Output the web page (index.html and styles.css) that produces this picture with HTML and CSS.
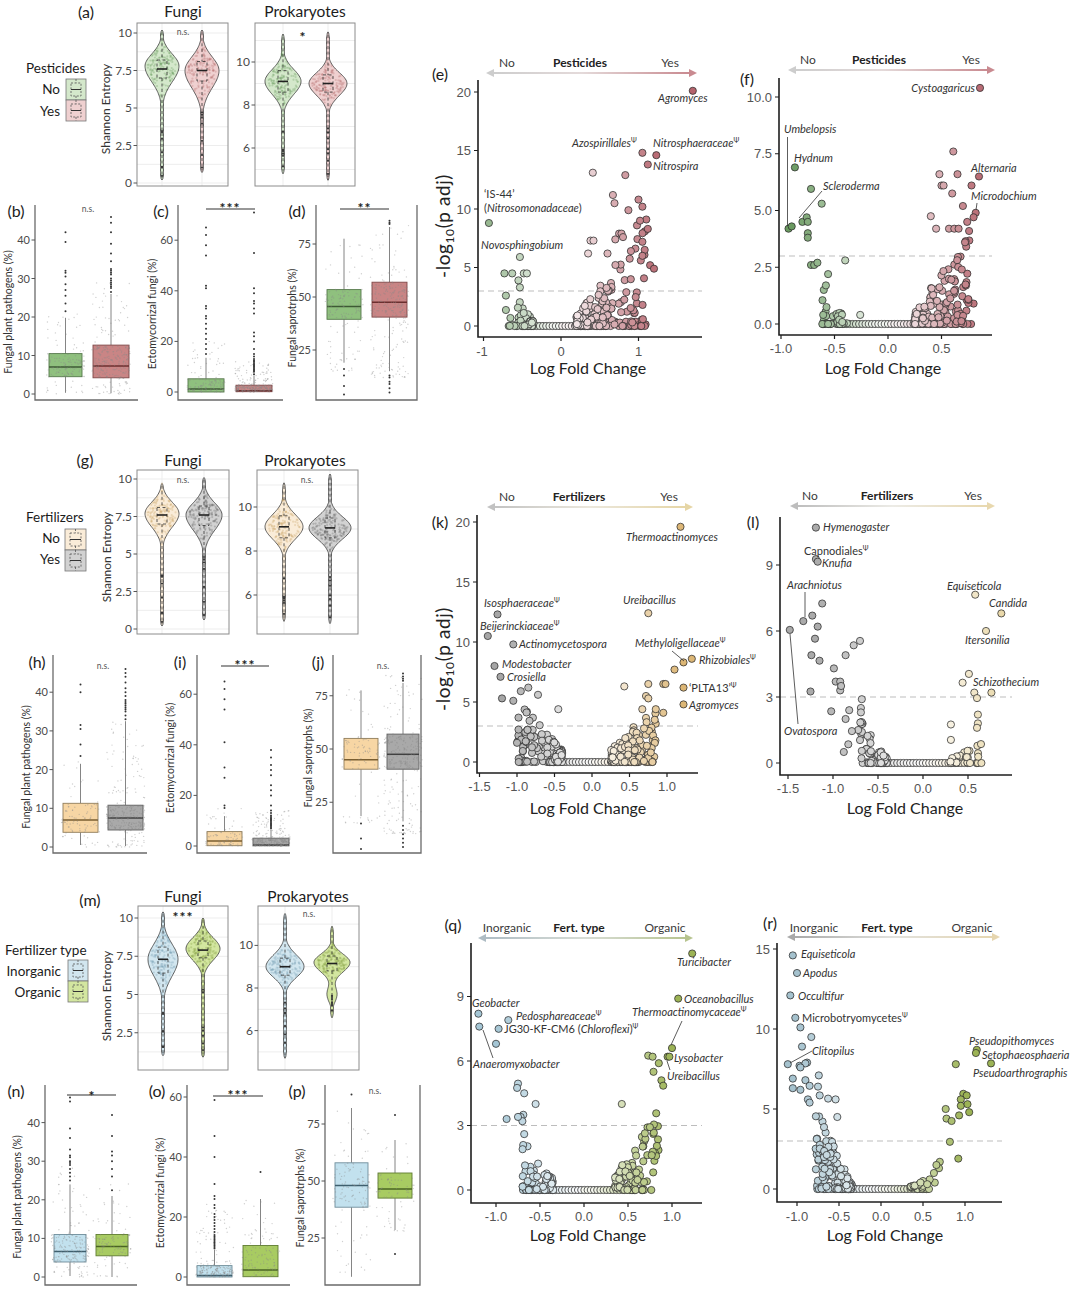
FILE: index.html
```html
<!DOCTYPE html>
<html lang="en">
<head>
<meta charset="utf-8">
<title>Pesticides and fertilizers — soil microbiome</title>
<link rel="stylesheet" href="styles.css">
</head>
<body>
<main class="fig">

<!-- ================= ROW 1 ================= -->
<section class="row">
 <div class="left">
  <svg id="v1" width="430" height="198" viewBox="0 0 430 198">
   <g class="grid"></g>
   <g class="vio"></g>
   <rect class="frm" x="137" y="23" width="91" height="163"/>
   <rect class="frm" x="255" y="23" width="100" height="163"/>
   <text class="pl" x="86" y="18">(a)</text>
   <text class="ttl" x="183" y="17">Fungi</text>
   <text class="ttl" x="305" y="17">Prokaryotes</text>
   <text class="lgt" x="26" y="73">Pesticides</text>
   <text class="lg" x="60" y="94">No</text>
   <text class="lg" x="60" y="116">Yes</text>
   <rect class="key kg" x="66" y="79" width="20" height="21"/>
   <rect class="key kr" x="66" y="100" width="20" height="21"/>
   <path class="keyd" d="M71 83h10v13h-10zM76 79v4M76 96v4M71 104h10v13h-10zM76 100v4M76 117v4"/>
   <path class="keym" d="M71 89.5h10M71 110.5h10"/>
   <path class="tm" d="M133.5 33h3.5M133.5 70.5h3.5M133.5 108h3.5M133.5 145.5h3.5M133.5 183h3.5M251.5 62h3.5M251.5 105h3.5M251.5 148h3.5"/>
   <g class="tk">
    <text x="132" y="37">10</text><text x="132" y="74.5">7.5</text><text x="132" y="112">5</text><text x="132" y="149.5">2.5</text><text x="132" y="187">0</text>
    <text x="250" y="66">10</text><text x="250" y="109">8</text><text x="250" y="152">6</text>
   </g>
   <text class="yt2" transform="translate(110,109) rotate(-90)">Shannon Entropy</text>
   <text class="ns" x="183" y="35">n.s.</text>
   <text class="sig" x="303" y="42">*</text>
  </svg>
  <div class="boxes">
   <svg id="b" width="145" height="237" viewBox="0 198 145 237">
    <path class="wh" d="M65.5 353.6V317.8M65.5 376.7V392.8M111 345.1V294M111 377.8V393"/>
    <rect class="bx bg" x="49" y="353.6" width="33" height="23.1"/>
    <path class="md mg" d="M49 367h33"/>
    <rect class="bx br" x="93" y="345.1" width="36" height="32.7"/>
    <path class="md mr" d="M93 365.9h36"/>
    <g class="jit"></g><g class="out"></g>
    <path class="ax" d="M35 205V400H138"/>
    <path class="tm" d="M31.5 394h3.5M31.5 355.5h3.5M31.5 317h3.5M31.5 278.5h3.5M31.5 240h3.5"/>
    <g class="tk tks"><text x="30" y="398">0</text><text x="30" y="359.5">10</text><text x="30" y="321">20</text><text x="30" y="282.5">30</text><text x="30" y="244">40</text></g>
    <text class="yt" transform="translate(12,312) rotate(-90)">Fungal plant pathogens (%)</text>
    <text class="pl" x="16" y="217">(b)</text>
    <text class="ns" x="88" y="212">n.s.</text>
   </svg>
   <svg id="c" width="145" height="237" viewBox="145 198 145 237">
    <path class="wh" d="M206 378.8V357.8M254 385.2V375.6"/>
    <rect class="bx bg" x="188" y="378.8" width="36" height="13.2"/>
    <path class="md mg" d="M188 389h36"/>
    <rect class="bx br" x="236" y="385.2" width="36" height="6.5"/>
    <path class="md mr" d="M236 390.7h36"/>
    <g class="jit"></g><g class="out"></g>
    <path class="ax" d="M178 205V400H283"/>
    <path class="tm" d="M174.5 392h3.5M174.5 341.4h3.5M174.5 290.8h3.5M174.5 240.2h3.5"/>
    <g class="tk tks"><text x="173" y="396">0</text><text x="173" y="345.4">20</text><text x="173" y="294.8">40</text><text x="173" y="244.2">60</text></g>
    <text class="yt" transform="translate(156,314) rotate(-90)">Ectomycorrizal fungi (%)</text>
    <text class="pl" x="161" y="217">(c)</text>
    <path class="sb" d="M206 209h49"/>
    <text class="sig" x="230" y="213">***</text>
   </svg>
   <svg id="d" width="140" height="237" viewBox="290 198 140 237">
    <path class="wh" d="M344 289.6V238.7M344 319.3V362.7M389.5 282.2V227M389.5 317.1V371.2"/>
    <rect class="bx bg" x="327" y="289.6" width="34" height="29.7"/>
    <path class="md mg" d="M327 306.5h34"/>
    <rect class="bx br" x="372" y="282.2" width="35" height="34.9"/>
    <path class="md mr" d="M372 302.3h35"/>
    <g class="jit"></g><g class="out"></g>
    <path class="ax" d="M316 205V400H417V205"/>
    <path class="tm" d="M312.5 350h3.5M312.5 297h3.5M312.5 244h3.5"/>
    <g class="tk tks"><text x="311" y="354">25</text><text x="311" y="301">50</text><text x="311" y="248">75</text></g>
    <text class="yt" transform="translate(296,318) rotate(-90)">Fungal saprotrphs (%)</text>
    <text class="pl" x="297" y="217">(d)</text>
    <path class="sb" d="M340 209h49"/>
    <text class="sig" x="364.5" y="213">**</text>
   </svg>
  </div>
 </div>

 <svg id="e" width="310" height="435" viewBox="430 0 310 435">
  <defs><linearGradient id="ge" x1="0" x2="1" y1="0" y2="0"><stop offset="0" stop-color="#cdcdcd"/><stop offset="0.45" stop-color="#e4dada"/><stop offset="1" stop-color="#c98a90"/></linearGradient></defs>
  <text class="hd" x="507" y="67">No</text><text class="hd hb" x="580" y="67">Pesticides</text><text class="hd" x="670" y="67">Yes</text>
  <rect x="493" y="72" width="197" height="2" fill="url(#ge)"/>
  <path d="M486 73l8-4v8z" fill="#cdcdcd"/><path d="M697 73l-8-4v8z" fill="#c98a90"/>
  <text class="pl" x="440" y="80">(e)</text>
  <path class="dl" d="M478 291H702"/>
  <g class="pts"></g>
  <path class="vax" d="M478 80V337H702"/>
  <path class="vtm" d="M474 326h4M474 267.5h4M474 209h4M474 150.5h4M474 92h4M483.5 337v4M561 337v4M638.5 337v4"/>
  <g class="vt"><text x="471" y="330.5">0</text><text x="471" y="272">5</text><text x="471" y="213.5">10</text><text x="471" y="155">15</text><text x="471" y="96.5">20</text></g>
  <g class="vtx"><text x="482" y="356">-1</text><text x="561" y="356">0</text><text x="638.5" y="356">1</text></g>
  <text class="vx" x="588" y="374">Log Fold Change</text>
  <text class="vy" transform="translate(450,226) rotate(-90)">-log<tspan class="sub" dy="4">10</tspan><tspan dy="-4">(p adj)</tspan></text>
  <text class="it" x="658" y="102">Agromyces</text>
  <text class="it" x="572" y="147">Azospirillales<tspan class="sup" dy="-4">Ψ</tspan></text>
  <text class="it" x="653" y="147">Nitrosphaeraceae<tspan class="sup" dy="-4">Ψ</tspan></text>
  <text class="it" x="653" y="170">Nitrospira</text>
  <text class="up" x="484" y="198">‘IS-44’</text>
  <text class="up" x="484" y="212">(<tspan class="itl">Nitrosomonadaceae</tspan>)</text>
  <text class="it" x="481" y="249">Novosphingobium</text>
 </svg>

 <svg id="f" width="340" height="435" viewBox="740 0 340 435">
  <defs><linearGradient id="gf" x1="0" x2="1" y1="0" y2="0"><stop offset="0" stop-color="#cdcdcd"/><stop offset="0.45" stop-color="#e4dada"/><stop offset="1" stop-color="#c98a90"/></linearGradient></defs>
  <text class="hd" x="808" y="64">No</text><text class="hd hb" x="879" y="64">Pesticides</text><text class="hd" x="971" y="64">Yes</text>
  <rect x="794" y="69" width="195" height="2" fill="url(#gf)"/>
  <path d="M788 70l8-4v8z" fill="#cdcdcd"/><path d="M995 70l-8-4v8z" fill="#c98a90"/>
  <text class="pl" x="747" y="85">(f)</text>
  <path class="dl" d="M779 256H992"/>
  <g class="pts"></g>
  <path class="vax" d="M779 78V335H992"/>
  <path class="vtm" d="M775 324h4M775 267.25h4M775 210.5h4M775 153.75h4M775 97h4M781 335v4M834.5 335v4M888 335v4M941.5 335v4"/>
  <g class="vt"><text x="772" y="328.5">0.0</text><text x="772" y="271.75">2.5</text><text x="772" y="215">5.0</text><text x="772" y="158.25">7.5</text><text x="772" y="101.5">10.0</text></g>
  <g class="vtx"><text x="781" y="353">-1.0</text><text x="834.5" y="353">-0.5</text><text x="888" y="353">0.0</text><text x="941.5" y="353">0.5</text></g>
  <text class="vx" x="883" y="374">Log Fold Change</text>
  <path class="ll" d="M787.5 137V226M822 191L799 218M977 203L976 210"/>
  <text class="it ends" x="975" y="92">Cystoagaricus</text>
  <text class="it" x="784" y="133">Umbelopsis</text>
  <text class="it" x="794" y="162">Hydnum</text>
  <text class="it" x="823" y="190">Scleroderma</text>
  <text class="it" x="971" y="172">Alternaria</text>
  <text class="it" x="971" y="200">Microdochium</text>
 </svg>
</section>

<!-- ================= ROW 2 ================= -->
<section class="row">
 <div class="left">
  <svg id="v2" width="430" height="210" viewBox="0 435 430 210">
   <g class="grid"></g>
   <g class="vio"></g>
   <rect class="frm" x="137" y="470" width="92" height="164"/>
   <rect class="frm" x="257" y="470" width="101" height="164"/>
   <text class="pl" x="85" y="466">(g)</text>
   <text class="ttl" x="183" y="466">Fungi</text>
   <text class="ttl" x="305" y="466">Prokaryotes</text>
   <text class="lgt" x="26" y="522">Fertilizers</text>
   <text class="lg" x="60" y="543">No</text>
   <text class="lg" x="60" y="564">Yes</text>
   <rect class="key kt" x="65" y="529" width="21" height="21"/>
   <rect class="key ky" x="65" y="550" width="21" height="21"/>
   <path class="keyd" d="M70 533h11v13h-11zM75.5 529v4M75.5 546v4M70 554h11v13h-11zM75.5 550v4M75.5 567v4"/>
   <path class="keym" d="M70 539.5h11M70 560.5h11"/>
   <path class="tm" d="M133.5 629h3.5M133.5 591.5h3.5M133.5 554h3.5M133.5 516.5h3.5M133.5 479h3.5M253.5 595h3.5M253.5 551h3.5M253.5 507h3.5"/>
   <g class="tk">
    <text x="132" y="633">0</text><text x="132" y="595.5">2.5</text><text x="132" y="558">5</text><text x="132" y="520.5">7.5</text><text x="132" y="483">10</text>
    <text x="252" y="599">6</text><text x="252" y="555">8</text><text x="252" y="511">10</text>
   </g>
   <text class="yt2" transform="translate(111,557) rotate(-90)">Shannon Entropy</text>
   <text class="ns" x="183" y="483">n.s.</text>
   <text class="ns" x="307" y="483">n.s.</text>
  </svg>
  <div class="boxes">
   <svg id="h" width="145" height="225" viewBox="0 645 145 225">
    <path class="wh" d="M80.5 803.3V763.8M80.5 832.3V845M125.5 805.2V721.2M125.5 830V846"/>
    <rect class="bx bt" x="63" y="803.3" width="35" height="29"/>
    <path class="md mt" d="M63 819.9h35"/>
    <rect class="bx by" x="108" y="805.2" width="35" height="24.8"/>
    <path class="md my" d="M108 818h35"/>
    <g class="jit"></g><g class="out"></g>
    <path class="ax" d="M53 655V853H147"/>
    <path class="tm" d="M49.5 847h3.5M49.5 808.3h3.5M49.5 769.6h3.5M49.5 730.9h3.5M49.5 692.2h3.5"/>
    <g class="tk tks"><text x="48" y="851">0</text><text x="48" y="812.3">10</text><text x="48" y="773.6">20</text><text x="48" y="734.9">30</text><text x="48" y="696.2">40</text></g>
    <text class="yt" transform="translate(30,767) rotate(-90)">Fungal plant pathogens (%)</text>
    <text class="pl" x="37" y="668">(h)</text>
    <text class="ns" x="103" y="669">n.s.</text>
   </svg>
   <svg id="i" width="145" height="225" viewBox="145 645 145 225">
    <path class="wh" d="M224.5 831.6V816.1M271 838.2V829.6"/>
    <rect class="bx bt" x="207" y="831.6" width="35" height="14.1"/>
    <path class="md mt" d="M207 841h35"/>
    <rect class="bx by" x="253" y="838.2" width="36" height="7.6"/>
    <path class="md my" d="M253 845h36"/>
    <g class="jit"></g><g class="out"></g>
    <path class="ax" d="M197 655V853H290"/>
    <path class="tm" d="M193.5 846h3.5M193.5 795.4h3.5M193.5 744.8h3.5M193.5 694.2h3.5"/>
    <g class="tk tks"><text x="192" y="850">0</text><text x="192" y="799.4">20</text><text x="192" y="748.8">40</text><text x="192" y="698.2">60</text></g>
    <text class="yt" transform="translate(174,758) rotate(-90)">Ectomycorrizal fungi (%)</text>
    <text class="pl" x="180" y="668">(i)</text>
    <path class="sb" d="M221 666h48"/>
    <text class="sig" x="245" y="670">***</text>
   </svg>
   <svg id="j" width="140" height="225" viewBox="290 645 140 225">
    <path class="wh" d="M361 738.4V690.4M361 769.2V816.1M403 734.1V683M403 769.2V821.4"/>
    <rect class="bx bt" x="344" y="738.4" width="34" height="30.8"/>
    <path class="md mt" d="M344 759.7h34"/>
    <rect class="bx by" x="387" y="734.1" width="32" height="35.1"/>
    <path class="md my" d="M387 754.3h32"/>
    <g class="jit"></g><g class="out"></g>
    <path class="ax" d="M333 655V853H421V655"/>
    <path class="tm" d="M329.5 802.25h3.5M329.5 749h3.5M329.5 695.75h3.5"/>
    <g class="tk tks"><text x="328" y="806.25">25</text><text x="328" y="753">50</text><text x="328" y="699.75">75</text></g>
    <text class="yt" transform="translate(312,758) rotate(-90)">Fungal saprotrphs (%)</text>
    <text class="pl" x="318" y="668">(j)</text>
    <text class="ns" x="383" y="669">n.s.</text>
   </svg>
  </div>
 </div>

 <svg id="k" width="310" height="435" viewBox="430 435 310 435">
  <defs><linearGradient id="gk" x1="0" x2="1" y1="0" y2="0"><stop offset="0" stop-color="#c2c2c2"/><stop offset="0.5" stop-color="#ebe7dc"/><stop offset="1" stop-color="#e6d6a6"/></linearGradient></defs>
  <text class="hd" x="507" y="501">No</text><text class="hd hb" x="579" y="501">Fertilizers</text><text class="hd" x="669" y="501">Yes</text>
  <rect x="493" y="506" width="194" height="2" fill="url(#gk)"/>
  <path d="M487 507l8-4v8z" fill="#c2c2c2"/><path d="M693 507l-8-4v8z" fill="#e6d6a6"/>
  <text class="pl" x="440" y="528">(k)</text>
  <path class="dl" d="M477 726H698"/>
  <g class="pts"></g>
  <path class="vax" d="M477 515V773H698"/>
  <path class="vtm" d="M473 762h4M473 702h4M473 642h4M473 582h4M473 522h4M479.5 773v4M517 773v4M554.5 773v4M592 773v4M629.5 773v4M667 773v4"/>
  <g class="vt"><text x="470" y="766.5">0</text><text x="470" y="706.5">5</text><text x="470" y="646.5">10</text><text x="470" y="586.5">15</text><text x="470" y="526.5">20</text></g>
  <g class="vtx"><text x="479.5" y="791">-1.5</text><text x="517" y="791">-1.0</text><text x="554.5" y="791">-0.5</text><text x="592" y="791">0.0</text><text x="629.5" y="791">0.5</text><text x="667" y="791">1.0</text></g>
  <text class="vx" x="588" y="814">Log Fold Change</text>
  <text class="vy" transform="translate(450,659) rotate(-90)">-log<tspan class="sub" dy="4">10</tspan><tspan dy="-4">(p adj)</tspan></text>
  <path class="ll" d="M672 651L684 661"/>
  <text class="it" x="626" y="541">Thermoactinomyces</text>
  <text class="it" x="623" y="604">Ureibacillus</text>
  <text class="it" x="484" y="607">Isosphaeraceae<tspan class="sup" dy="-4">Ψ</tspan></text>
  <text class="it" x="480" y="630">Beijerinckiaceae<tspan class="sup" dy="-4">Ψ</tspan></text>
  <text class="it" x="519" y="648">Actinomycetospora</text>
  <text class="it" x="502" y="668">Modestobacter</text>
  <text class="it" x="507" y="681">Crosiella</text>
  <text class="it" x="635" y="647">Methyloligellaceae<tspan class="sup" dy="-4">Ψ</tspan></text>
  <text class="it" x="699" y="664">Rhizobiales<tspan class="sup" dy="-4">Ψ</tspan></text>
  <text class="up" x="689" y="692">‘PLTA13’<tspan class="sup" dy="-4">Ψ</tspan></text>
  <text class="it" x="689" y="709">Agromyces</text>
 </svg>

 <svg id="l" width="340" height="435" viewBox="740 435 340 435">
  <defs><linearGradient id="gl" x1="0" x2="1" y1="0" y2="0"><stop offset="0" stop-color="#bdbdbd"/><stop offset="0.5" stop-color="#ecebe6"/><stop offset="1" stop-color="#e8d8ae"/></linearGradient></defs>
  <text class="hd" x="810" y="500">No</text><text class="hd hb" x="887" y="500">Fertilizers</text><text class="hd" x="973" y="500">Yes</text>
  <rect x="796" y="505" width="193" height="2" fill="url(#gl)"/>
  <path d="M790 506l8-4v8z" fill="#bdbdbd"/><path d="M995 506l-8-4v8z" fill="#e8d8ae"/>
  <text class="pl" x="753" y="528">(l)</text>
  <path class="dl" d="M780 697H1012"/>
  <g class="pts"></g>
  <path class="vax" d="M780 517V775H1012"/>
  <path class="vtm" d="M776 763h4M776 697h4M776 631h4M776 565h4M788 775v4M833 775v4M878 775v4M923 775v4M968 775v4"/>
  <g class="vt"><text x="773" y="767.5">0</text><text x="773" y="701.5">3</text><text x="773" y="635.5">6</text><text x="773" y="569.5">9</text></g>
  <g class="vtx"><text x="788" y="793">-1.5</text><text x="833" y="793">-1.0</text><text x="878" y="793">-0.5</text><text x="923" y="793">0.0</text><text x="968" y="793">0.5</text></g>
  <text class="vx" x="905" y="814">Log Fold Change</text>
  <path class="ll" d="M805 592V617M798 724L790 634"/>
  <text class="it" x="823" y="531">Hymenogaster</text>
  <text class="up" x="804" y="555">Capnodiales<tspan class="sup" dy="-4">Ψ</tspan></text>
  <text class="it" x="822" y="567">Knufia</text>
  <text class="it" x="787" y="589">Arachniotus</text>
  <text class="it" x="784" y="735">Ovatospora</text>
  <text class="it" x="947" y="590">Equiseticola</text>
  <text class="it" x="989" y="607">Candida</text>
  <text class="it" x="965" y="644">Itersonilia</text>
  <text class="it" x="973" y="686">Schizothecium</text>
 </svg>
</section>

<!-- ================= ROW 3 ================= -->
<section class="row">
 <div class="left">
  <svg id="v3" width="430" height="210" viewBox="0 870 430 210">
   <g class="grid"></g>
   <g class="vio"></g>
   <rect class="frm" x="138" y="906" width="90" height="164"/>
   <rect class="frm" x="258" y="906" width="101" height="164"/>
   <text class="pl" x="90" y="906">(m)</text>
   <text class="ttl" x="183" y="902">Fungi</text>
   <text class="ttl" x="308" y="902">Prokaryotes</text>
   <text class="lgt" x="5" y="955">Fertilizer type</text>
   <text class="lg" x="61" y="976">Inorganic</text>
   <text class="lg" x="61" y="997">Organic</text>
   <rect class="key kb" x="68" y="960" width="20" height="21"/>
   <rect class="key kl" x="68" y="981" width="20" height="21"/>
   <path class="keyd" d="M73 964h10v13h-10zM78 960v4M78 977v4M73 985h10v13h-10zM78 981v4M78 998v4"/>
   <path class="keym" d="M73 970.5h10M73 991.5h10"/>
   <path class="tm" d="M134.5 1032.75h3.5M134.5 994.5h3.5M134.5 956.25h3.5M134.5 918h3.5M254.5 1030.6h3.5M254.5 988h3.5M254.5 945.4h3.5"/>
   <g class="tk">
    <text x="133" y="1036.75">2.5</text><text x="133" y="998.5">5</text><text x="133" y="960.25">7.5</text><text x="133" y="922">10</text>
    <text x="253" y="1034.6">6</text><text x="253" y="992">8</text><text x="253" y="949.4">10</text>
   </g>
   <text class="yt2" transform="translate(111,996) rotate(-90)">Shannon Entropy</text>
   <text class="sig" x="183" y="922">***</text>
   <text class="ns" x="309" y="917">n.s.</text>
  </svg>
  <div class="boxes">
   <svg id="n" width="145" height="210" viewBox="0 1080 145 210">
    <path class="wh" d="M70 1234.5V1184.4M70 1262V1276M112 1234.5V1196M112 1255.8V1277"/>
    <rect class="bx bb" x="54" y="1234.5" width="32" height="27.5"/>
    <path class="md mb" d="M54 1251.5h32"/>
    <rect class="bx bl" x="96" y="1234.5" width="32" height="21.3"/>
    <path class="md ml" d="M96 1246.5h32"/>
    <g class="jit"></g><g class="out"></g>
    <path class="ax" d="M45 1085V1285H137"/>
    <path class="tm" d="M41.5 1277h3.5M41.5 1238.4h3.5M41.5 1199.8h3.5M41.5 1161.2h3.5M41.5 1122.6h3.5"/>
    <g class="tk tks"><text x="40" y="1281">0</text><text x="40" y="1242.4">10</text><text x="40" y="1203.8">20</text><text x="40" y="1165.2">30</text><text x="40" y="1126.6">40</text></g>
    <text class="yt" transform="translate(21,1197) rotate(-90)">Fungal plant pathogens (%)</text>
    <text class="pl" x="16" y="1097">(n)</text>
    <path class="sb" d="M67 1095h49"/>
    <text class="sig" x="92" y="1101">*</text>
   </svg>
   <svg id="o" width="145" height="210" viewBox="145 1080 145 210">
    <path class="wh" d="M214.5 1265.6V1250M260.5 1245.5V1199"/>
    <rect class="bx bb" x="197" y="1265.6" width="35" height="11.4"/>
    <path class="md mb" d="M197 1275.5h35"/>
    <rect class="bx bl" x="243" y="1245.5" width="35" height="31.2"/>
    <path class="md ml" d="M243 1270.1h35"/>
    <g class="jit"></g><g class="out"></g>
    <path class="ax" d="M187 1085V1285H290"/>
    <path class="tm" d="M183.5 1277h3.5M183.5 1217h3.5M183.5 1157h3.5M183.5 1097h3.5"/>
    <g class="tk tks"><text x="182" y="1281">0</text><text x="182" y="1221">20</text><text x="182" y="1161">40</text><text x="182" y="1101">60</text></g>
    <text class="yt" transform="translate(164,1193) rotate(-90)">Ectomycorrizal fungi (%)</text>
    <text class="pl" x="157" y="1097">(o)</text>
    <path class="sb" d="M213 1096h50"/>
    <text class="sig" x="238" y="1100">***</text>
   </svg>
   <svg id="p" width="140" height="210" viewBox="290 1080 140 210">
    <path class="wh" d="M351.5 1162.8V1108M351.5 1207.2V1276.8M395 1173V1140M395 1198.1V1230"/>
    <rect class="bx bb" x="335" y="1162.8" width="33" height="44.4"/>
    <path class="md mb" d="M335 1185.6h33"/>
    <rect class="bx bl" x="378" y="1173" width="34" height="25.1"/>
    <path class="md ml" d="M378 1189h34"/>
    <g class="jit"></g><g class="out"></g>
    <path class="ax" d="M325 1085V1285H420V1085"/>
    <path class="tm" d="M321.5 1238h3.5M321.5 1181h3.5M321.5 1124h3.5"/>
    <g class="tk tks"><text x="320" y="1242">25</text><text x="320" y="1185">50</text><text x="320" y="1128">75</text></g>
    <text class="yt" transform="translate(304,1198) rotate(-90)">Fungal saprotrphs (%)</text>
    <text class="pl" x="297" y="1097">(p)</text>
    <text class="ns" x="375" y="1094">n.s.</text>
   </svg>
  </div>
 </div>

 <svg id="q" width="310" height="420" viewBox="430 870 310 420">
  <defs><linearGradient id="gq" x1="0" x2="1" y1="0" y2="0"><stop offset="0" stop-color="#aebcc4"/><stop offset="0.5" stop-color="#d8ddd6"/><stop offset="1" stop-color="#b7c48f"/></linearGradient></defs>
  <text class="pl" x="453" y="931">(q)</text>
  <text class="hd" x="507" y="932">Inorganic</text><text class="hd hb" x="579" y="932">Fert. type</text><text class="hd" x="665" y="932">Organic</text>
  <rect x="484" y="937" width="203" height="2" fill="url(#gq)"/>
  <path d="M478 938l8-4v8z" fill="#aebcc4"/><path d="M693 938l-8-4v8z" fill="#b7c48f"/>
  <path class="dl" d="M471 1125.5H702"/>
  <g class="pts"></g>
  <path class="vax" d="M471 943V1203H702"/>
  <path class="vtm" d="M467 1190h4M467 1125.5h4M467 1061h4M467 996.5h4M496 1203v4M540 1203v4M584 1203v4M628 1203v4M672 1203v4"/>
  <g class="vt"><text x="464" y="1194.5">0</text><text x="464" y="1130">3</text><text x="464" y="1065.5">6</text><text x="464" y="1001">9</text></g>
  <g class="vtx"><text x="496" y="1221">-1.0</text><text x="540" y="1221">-0.5</text><text x="584" y="1221">0.0</text><text x="628" y="1221">0.5</text><text x="672" y="1221">1.0</text></g>
  <text class="vx" x="588" y="1241">Log Fold Change</text>
  <path class="ll" d="M682 1021L671 1045M493 1058L483 1030M670 1070L667 1061"/>
  <text class="it" x="677" y="966">Turicibacter</text>
  <text class="it" x="684" y="1003">Oceanobacillus</text>
  <text class="it" x="632" y="1016">Thermoactinomycaceae<tspan class="sup" dy="-4">Ψ</tspan></text>
  <text class="it" x="674" y="1062">Lysobacter</text>
  <text class="it" x="667" y="1080">Ureibacillus</text>
  <text class="it" x="472" y="1007">Geobacter</text>
  <text class="it" x="516" y="1020">Pedosphareaceae<tspan class="sup" dy="-4">Ψ</tspan></text>
  <text class="up" x="504" y="1033">JG30-KF-CM6 (<tspan class="itl">Chloroflexi</tspan>)<tspan class="sup" dy="-4">Ψ</tspan></text>
  <text class="it" x="473" y="1068">Anaeromyxobacter</text>
 </svg>

 <svg id="r" width="340" height="420" viewBox="740 870 340 420">
  <defs><linearGradient id="gr" x1="0" x2="1" y1="0" y2="0"><stop offset="0" stop-color="#a9a9a9"/><stop offset="0.5" stop-color="#e2e2de"/><stop offset="1" stop-color="#e6d6b0"/></linearGradient></defs>
  <text class="pl" x="770" y="929">(r)</text>
  <text class="hd" x="814" y="932">Inorganic</text><text class="hd hb" x="887" y="932">Fert. type</text><text class="hd" x="972" y="932">Organic</text>
  <rect x="793" y="936" width="201" height="2" fill="url(#gr)"/>
  <path d="M787 937l8-4v8z" fill="#a9a9a9"/><path d="M1000 937l-8-4v8z" fill="#e6d6b0"/>
  <path class="dl" d="M777 1141H1002"/>
  <g class="pts"></g>
  <path class="vax" d="M777 943V1202H1002"/>
  <path class="vtm" d="M773 1189h4M773 1109h4M773 1029h4M773 949h4M797 1202v4M839 1202v4M881 1202v4M923 1202v4M965 1202v4"/>
  <g class="vt"><text x="770" y="1193.5">0</text><text x="770" y="1113.5">5</text><text x="770" y="1033.5">10</text><text x="770" y="953.5">15</text></g>
  <g class="vtx"><text x="797" y="1221">-1.0</text><text x="839" y="1221">-0.5</text><text x="881" y="1221">0.0</text><text x="923" y="1221">0.5</text><text x="965" y="1221">1.0</text></g>
  <text class="vx" x="885" y="1241">Log Fold Change</text>
  <path class="ll" d="M812 1051L790 1063"/>
  <text class="it" x="801" y="958">Equiseticola</text>
  <text class="it" x="803" y="977">Apodus</text>
  <text class="it" x="798" y="1000">Occultifur</text>
  <text class="up" x="802" y="1022">Microbotryomycetes<tspan class="sup" dy="-4">Ψ</tspan></text>
  <text class="it" x="812" y="1055">Clitopilus</text>
  <text class="it" x="969" y="1045">Pseudopithomyces</text>
  <text class="it" x="982" y="1059">Setophaeosphaeria</text>
  <text class="it" x="973" y="1077">Pseudoarthrographis</text>
 </svg>
</section>

</main>
<script src="app.js"></script>
</body>
</html>
```

FILE: styles.css
```css
html, body { margin: 0; padding: 0; background: #ffffff; }
body { width: 1080px; height: 1290px; overflow: hidden; font-family: Lato, "Liberation Sans", sans-serif; }

.fig { display: flex; flex-direction: column; width: 1080px; }
.row { display: flex; }
.left { display: flex; flex-direction: column; width: 430px; }
.boxes { display: flex; }
svg { display: block; flex: none; overflow: visible; }
svg text { font-family: Lato, "Liberation Sans", "DejaVu Sans", sans-serif; }

/* generic labels */
.pl { font-size: 16px; fill: #1c1c1c; text-anchor: middle; }
.ttl { font-size: 15.5px; fill: #1c1c1c; text-anchor: middle; }
.lgt { font-size: 13.5px; fill: #1c1c1c; }
.lg { font-size: 13.5px; fill: #1c1c1c; text-anchor: end; }
.tk { font-size: 12px; fill: #4a4a4a; text-anchor: end; }
.tks { font-size: 11px; }
.tm { stroke: #555555; stroke-width: 1; fill: none; }
.frm { fill: none; stroke: #8c8c8c; stroke-width: 1; }
.yt { font-size: 10.5px; fill: #333333; text-anchor: middle; }
.yt2 { font-size: 12px; fill: #333333; text-anchor: middle; }
.ns { font-size: 8.5px; fill: #555555; text-anchor: middle; }
.sig { font-size: 14px; fill: #222222; text-anchor: middle; font-weight: 700; letter-spacing: 1px; }
.sb { stroke: #333333; stroke-width: 1.2; fill: none; }
.ax { fill: none; stroke: #6a6a6a; stroke-width: 1.3; }

/* legend keys */
.key { stroke: #777777; stroke-width: 0.8; }
.kg { fill: #d4e8cb; }
.kr { fill: #efd0d0; }
.kt { fill: #faecd8; }
.ky { fill: #d2d2d2; }
.kb { fill: #d2e6ef; }
.kl { fill: #d3e6a0; }
.keyd { fill: none; stroke: #555555; stroke-width: 0.8; stroke-dasharray: 2 1.6; }
.keym { stroke: #333333; stroke-width: 1.2; fill: none; }

/* violins */
.grid line { stroke: #ededed; stroke-width: 1; }
.vs { stroke: #3a3a3a; stroke-width: 0.8; }
.vj { opacity: 0.28; }
.vo { fill: #3a3a3a; }
.vd { stroke: #333333; stroke-width: 0.8; stroke-dasharray: 3 2.5; fill: none; }
.vb { fill: none; stroke: #333333; stroke-width: 0.8; stroke-dasharray: 3 2.5; }
.vm { stroke: #222222; stroke-width: 1.6; fill: none; }

/* box plots */
.wh { stroke: #777777; stroke-width: 0.9; fill: none; }
.bx { stroke-width: 0.9; }
.bg { fill: #8fc07e; stroke: #55784a; }
.br { fill: #c98585; stroke: #7f4848; }
.bt { fill: #f7d6a4; stroke: #8f7c5a; }
.by { fill: #a9a9a9; stroke: #5d5d5d; }
.bb { fill: #c2e1ee; stroke: #6f8d9a; }
.bl { fill: #a8cb62; stroke: #5f7c31; }
.md { stroke-width: 1.5; fill: none; }
.mg { stroke: #3d5a34; }
.mr { stroke: #6b2f2f; }
.mt { stroke: #7a5e30; }
.my { stroke: #404040; }
.mb { stroke: #3e5f6e; }
.ml { stroke: #4a6423; }
.jit circle { fill: #8a8a8a; opacity: 0.4; }
.out circle { fill: #333333; }

/* volcano plots */
.hd { font-size: 12px; fill: #3a3a3a; text-anchor: middle; }
.hb { font-weight: 700; fill: #222222; }
.dl { stroke: #bdbdbd; stroke-width: 1.2; stroke-dasharray: 6 4; fill: none; }
.vax { fill: none; stroke: #1e1e1e; stroke-width: 1.6; }
.vtm { stroke: #1e1e1e; stroke-width: 1.2; fill: none; }
.vt { font-size: 13px; fill: #555555; text-anchor: end; }
.vtx { font-size: 13px; fill: #555555; text-anchor: middle; }
.vt text, .vtx text { font-family: "Liberation Sans", Arial, sans-serif; }
.vx { font-size: 16px; fill: #222222; text-anchor: middle; }
.vy { font-size: 19px; fill: #222222; text-anchor: middle; letter-spacing: 0.6px; }
.sub { font-size: 12px; }
.pts circle { stroke: #2b2b2b; stroke-width: 0.75; }
.it { font-size: 11px; font-style: italic; fill: #333333; }
.up { font-size: 11px; fill: #333333; }
.itl { font-style: italic; }
.sup { font-size: 7px; font-style: normal; }
.ends { text-anchor: end; }
.ll { stroke: #333333; stroke-width: 0.8; fill: none; }
```

FILE: app.js
```js
(function () {
  var NS = 'http://www.w3.org/2000/svg';
  function mk(p, t, a) { var e = document.createElementNS(NS, t); for (var k in a) e.setAttribute(k, a[k]); p.appendChild(e); return e; }
  function rng(s) { s = s >>> 0; return function () { s = (Math.imul(s, 1664525) + 1013904223) >>> 0; return s / 4294967296; }; }
  function gs(r) { var u = r() || 1e-6, v = r(); return Math.sqrt(-2 * Math.log(u)) * Math.cos(6.2832 * v); }
  function rgb(h) { return [parseInt(h.substr(1, 2), 16), parseInt(h.substr(3, 2), 16), parseInt(h.substr(5, 2), 16)]; }
  function mix(h, t) { return 'rgb(' + rgb(h).map(function (v) { return Math.round(255 + (v - 255) * t); }).join(',') + ')'; }
  function q(id, sel) { return document.querySelector('#' + id + ' ' + sel); }
  function f1(v) { return (+v).toFixed(1); }

  /* ---------- volcano plots ---------- */
  function volcano(id, c) {
    var g = q(id, '.pts'), r = rng(c.seed);
    var X = function (v) { return c.x0 + v * c.sx; }, Y = function (v) { return c.y0 - v * c.sy; };
    var P = [], st = 3.2 / c.sx;
    for (var v = c.base[0]; v <= c.base[1] + 1e-9; v += st) P.push([v, 0]);
    c.arms.forEach(function (a) {
      for (var i = 0; i < a.n; i++) {
        var u = Math.pow(r(), a.p), x = a.a + (a.b - a.a) * u, ym = a.h0 + (a.h1 - a.h0) * u;
        var y = r() < a.z ? 0 : ym * Math.pow(r(), a.q);
        P.push([x, y]);
      }
    });
    P = P.concat(c.pts);
    P.forEach(function (p) {
      var t = Math.min(1, Math.max(0, (Math.abs(p[0]) - c.ct[0]) / (c.ct[1] - c.ct[0])));
      mk(g, 'circle', { cx: f1(X(p[0])), cy: f1(Y(p[1])), r: 3.6, fill: mix(p[0] < 0 ? c.cl : c.cr, 0.08 + 0.92 * t) });
    });
  }

  volcano('e', { seed: 5, x0: 561, sx: 77.5, y0: 326, sy: 11.7, cl: '#6f9c66', cr: '#b5646d', ct: [0.1, 1.3], base: [-0.48, 0.55],
    arms: [{ a: -0.36, b: -0.72, n: 60, h0: 0.4, h1: 4.2, p: 1.3, q: 1.6, z: 0.25 },
           { a: 0.2, b: 1.1, n: 170, h0: 0.8, h1: 9, p: 1.5, q: 1.5, z: 0.2 }],
    pts: [[1.7, 20.1], [1.05, 14.8], [1.23, 14.6], [1.12, 13.8], [0.41, 13.1], [0.83, 12.9], [0.67, 11.2], [0.69, 10.5], [1.0, 10.8], [1.05, 10.2], [0.87, 9.9], [1.1, 9.1], [0.98, 8.6], [1.02, 9.0], [1.12, 8.3], [0.75, 7.9], [0.78, 7.9], [0.7, 7.4], [0.8, 7.6], [-0.93, 8.8], [-0.53, 5.9], [1.05, 7.2], [1.08, 6.5], [1.15, 5.2], [1.2, 4.9], [0.9, 4.0], [1.03, 5.6], [1.05, 6.0], [0.38, 7.3], [0.42, 7.3], [0.35, 6.2], [0.6, 6.2], [-0.73, 4.5], [-0.63, 4.5], [-0.48, 4.5], [-0.44, 4.5], [-0.55, 3.9], [-0.53, 3.3]] });

  volcano('f', { seed: 6, x0: 888, sx: 107, y0: 324, sy: 22.7, cl: '#6a9a60', cr: '#b5646d', ct: [0.1, 0.9], base: [-0.42, 0.45],
    arms: [{ a: -0.38, b: -0.62, n: 35, h0: 0.3, h1: 1.2, p: 1, q: 1.3, z: 0.3 },
           { a: 0.25, b: 0.8, n: 150, h0: 0.5, h1: 4.4, p: 1.3, q: 1.3, z: 0.15 }],
    pts: [[-0.93, 4.2], [-0.9, 4.3], [-0.8, 4.5], [-0.76, 4.7], [-0.75, 4.5], [-0.75, 4.0], [-0.75, 3.8], [-0.72, 5.95], [-0.87, 6.9], [-0.62, 5.3], [-0.72, 2.6], [-0.69, 2.6], [-0.66, 2.7], [-0.4, 2.8], [-0.56, 2.2], [-0.6, 1.5], [-0.58, 1.7], [-0.26, 0.4],
      [0.61, 7.6], [0.86, 10.4], [0.48, 6.6], [0.65, 6.6], [0.5, 6.1], [0.52, 6.1], [0.6, 5.75], [0.78, 6.1], [0.85, 6.5], [0.7, 5.2], [0.82, 4.9], [0.8, 4.7], [0.74, 4.5], [0.72, 3.6], [0.4, 4.75], [0.45, 4.2], [0.57, 4.2], [0.62, 4.2], [0.66, 4.2], [0.69, 2.4]] });

  volcano('k', { seed: 7, x0: 592, sx: 75, y0: 762, sy: 12, cl: '#a6a6a6', cr: '#dcb675', ct: [0.1, 1.2], base: [-0.6, 0.6],
    arms: [{ a: -0.4, b: -1.0, n: 130, h0: 1, h1: 5.2, p: 1.5, q: 1.3, z: 0.15 },
           { a: 0.25, b: 0.85, n: 140, h0: 1, h1: 4.8, p: 1.2, q: 1.4, z: 0.15 }],
    pts: [[1.18, 19.6], [0.75, 12.4], [-1.26, 12.3], [-1.39, 10.5], [-1.05, 9.8], [-1.3, 8.0], [-1.22, 7.1], [1.22, 8.3], [1.33, 8.6], [1.22, 6.2], [1.22, 4.8], [0.43, 6.3], [0.75, 6.5], [0.95, 6.5], [0.98, 6.5], [0.72, 5.5], [0.75, 5.3], [1.1, 7.7], [-0.85, 6.2], [-0.95, 5.9], [-0.72, 5.6], [-1.2, 5.3], [-1.05, 5.1], [-0.45, 4.4], [0.67, 4.4], [0.85, 4.4], [0.95, 4.1], [-1.0, 1.6], [-0.98, 2.7], [-0.98, 3.7]] });

  volcano('l', { seed: 8, x0: 923, sx: 90, y0: 763, sy: 22, cl: '#aaaaaa', cr: '#e0c98a', ct: [0.1, 1.2], base: [-0.5, 0.5],
    arms: [{ a: -0.4, b: -0.7, n: 75, h0: 0.3, h1: 2.0, p: 1, q: 1.5, z: 0.2 },
           { a: 0.3, b: 0.65, n: 28, h0: 0.2, h1: 0.9, p: 1, q: 1.2, z: 0.3 }],
    pts: [[-1.19, 10.7], [-1.19, 9.27], [-1.17, 9.15], [-1.33, 6.45], [-1.48, 6.05], [-1.23, 6.7], [-1.12, 7.25], [-1.17, 6.2], [-1.2, 5.65], [-1.24, 4.9], [-1.15, 4.65], [-1.25, 3.25], [-0.99, 4.3], [-0.97, 3.7], [-0.92, 3.7], [-0.92, 3.3], [-0.86, 4.9], [-0.77, 5.35], [-0.7, 5.55], [-0.91, 3.5], [-0.68, 2.9], [-0.69, 2.5], [-0.69, 2.3], [-1.02, 2.35], [-0.82, 2.4], [-0.86, 2.0], [-0.88, 0.5], [-0.83, 0.85], [-0.72, 1.5], [-0.79, 1.45],
      [0.58, 7.65], [0.87, 6.8], [0.7, 6.0], [0.51, 4.05], [0.44, 3.65], [0.57, 3.2], [0.76, 3.2], [0.6, 2.95], [0.61, 2.2], [0.61, 1.8], [0.6, 1.6], [0.31, 1.75], [0.31, 1.05]] });

  volcano('q', { seed: 9, x0: 584, sx: 88, y0: 1190, sy: 21.5, cl: '#a5c6d5', cr: '#9cb355', ct: [0.1, 1.0], base: [-0.65, 0.55],
    arms: [{ a: -0.35, b: -0.7, n: 70, h0: 0.5, h1: 2.6, p: 1, q: 1.4, z: 0.2 },
           { a: 0.35, b: 0.85, n: 95, h0: 0.6, h1: 4.2, p: 1, q: 1.3, z: 0.15 }],
    pts: [[1.23, 11.0], [1.07, 8.9], [1.0, 6.6], [0.95, 6.2], [0.97, 6.2], [0.73, 6.25], [0.78, 6.2], [0.85, 5.9], [0.79, 5.5], [0.88, 5.1], [0.9, 4.85], [0.43, 4.0], [-1.2, 8.2], [-0.86, 7.9], [-0.97, 7.5], [-1.19, 7.6], [-1.0, 6.8], [-0.75, 4.95], [-0.76, 4.75], [-0.68, 4.5], [-0.55, 4.0], [-0.88, 3.3], [-0.69, 3.5], [-0.72, 3.4], [-0.7, 3.2], [-0.68, 2.6], [-0.75, 3.4]] });

  volcano('r', { seed: 10, x0: 881, sx: 84, y0: 1189, sy: 16, cl: '#a5c2ce', cr: '#9cb355', ct: [0.1, 1.0], base: [-0.45, 0.55],
    arms: [{ a: -0.35, b: -0.78, n: 150, h0: 0.3, h1: 5.2, p: 1.3, q: 1.2, z: 0.12 },
           { a: 0.35, b: 0.6, n: 15, h0: 0.2, h1: 0.6, p: 1, q: 1, z: 0.3 }],
    pts: [[-1.05, 14.6], [-1.0, 13.5], [-1.08, 12.1], [-1.02, 10.7], [-0.96, 10.1], [-0.83, 9.5], [-0.94, 8.9], [-1.11, 7.8], [-0.97, 7.7], [-0.88, 7.9], [-0.9, 7.85], [-0.96, 7.6], [-1.05, 6.9], [-1.05, 6.3], [-0.9, 6.8], [-0.85, 6.45], [-0.74, 7.1], [-0.75, 6.4], [-0.96, 6.2], [-0.73, 5.85], [-0.63, 5.65], [-0.54, 5.6], [-0.87, 5.6], [-0.85, 5.4], [-0.52, 4.5],
      [1.14, 8.7], [1.13, 8.5], [1.31, 7.85], [0.89, 7.8], [0.98, 5.95], [1.02, 5.85], [0.95, 5.6], [0.95, 5.2], [1.03, 5.3], [1.05, 4.8], [0.77, 5.0], [0.78, 4.4], [0.84, 4.25], [0.93, 4.6], [0.82, 2.95], [0.92, 1.9], [0.7, 1.7], [0.69, 1.3], [0.66, 1.5], [0.63, 1.0], [0.64, 0.4], [0.58, 0.6], [0.5, 0.5], [0.47, 0.4], [0.55, 0.3]] });

  /* ---------- box plot jitter + outliers ---------- */
  var BX = [
    { id: 'b', cx: 65.5, y0: 394, s: 3.85, q1: 4.5, q3: 10.5, lo: 0, hi: 22, n: 140, seed: 11, out: [21.5, 23.5, 25.5, 27, 28.5, 30.5, 31.5, 32, 39.5, 42] },
    { id: 'b', cx: 111, y0: 394, s: 3.85, q1: 4.2, q3: 12.7, lo: 0, hi: 30, n: 260, seed: 12, out: [26.5, 27.5, 28, 28.5, 29, 29.5, 30, 31, 31.5, 32, 32.5, 34.5, 36.5, 39, 42, 44.5, 46] },
    { id: 'c', cx: 206, y0: 392, s: 2.53, q1: 0, q3: 5.2, lo: 0, hi: 20, n: 140, seed: 13, out: [15, 17, 19, 21, 23, 25, 27, 29, 30, 33, 34, 41, 42, 54, 58, 62, 65] },
    { id: 'c', cx: 254, y0: 392, s: 2.53, q1: 0, q3: 2.7, lo: 0, hi: 12, n: 260, seed: 14, out: [7, 8, 8.5, 9, 9.5, 10, 10.5, 11, 11.5, 12, 12.5, 13, 14, 15, 17, 20, 22, 23.5, 31, 33, 35, 36, 39, 41, 55, 71] },
    { id: 'd', cx: 344, y0: 403, s: 2.12, q1: 39.5, q3: 53.5, lo: 15, hi: 80, n: 140, seed: 15, out: [16, 13, 8, 4] },
    { id: 'd', cx: 389.5, y0: 403, s: 2.12, q1: 40.5, q3: 57, lo: 12, hi: 86, n: 260, seed: 16, out: [86, 85, 84.5, 13, 12, 10, 9, 7, 5] },
    { id: 'h', cx: 80.5, y0: 847, s: 3.87, q1: 3.8, q3: 11.3, lo: 0, hi: 22, n: 90, seed: 21, out: [23.5, 26.5, 30.5, 31.5, 40, 42] },
    { id: 'h', cx: 125.5, y0: 847, s: 3.87, q1: 4.4, q3: 10.8, lo: 0, hi: 33, n: 300, seed: 22, out: [33, 34, 35, 35.5, 36, 36.5, 37, 37.5, 38, 39, 40, 41, 42.5, 44, 45, 46] },
    { id: 'i', cx: 224.5, y0: 846, s: 2.53, q1: 0, q3: 5.7, lo: 0, hi: 15, n: 90, seed: 23, out: [15, 16, 27, 31, 41, 54, 58, 62, 65] },
    { id: 'i', cx: 271, y0: 846, s: 2.53, q1: 0, q3: 3.1, lo: 0, hi: 14, n: 300, seed: 24, out: [7, 7.5, 8, 8.5, 9, 9.5, 10, 10.5, 11, 11.5, 12, 13, 14, 16, 20, 22, 24, 28, 30, 32, 35, 38] },
    { id: 'j', cx: 361, y0: 855.5, s: 2.13, q1: 40.5, q3: 55, lo: 15, hi: 78, n: 90, seed: 25, out: [15, 8, 3] },
    { id: 'j', cx: 403, y0: 855.5, s: 2.13, q1: 40.5, q3: 57, lo: 10, hi: 85, n: 300, seed: 26, out: [85.5, 84, 83, 82, 14, 12, 10, 8, 6, 4] },
    { id: 'n', cx: 70, y0: 1277, s: 3.86, q1: 3.9, q3: 11, lo: 0, hi: 30, n: 200, seed: 31, out: [25, 26, 27, 28, 29, 29.5, 30, 31, 31.5, 33, 36, 38.5, 45.5, 46.5] },
    { id: 'n', cx: 112, y0: 1277, s: 3.86, q1: 5.5, q3: 11, lo: 0, hi: 25, n: 120, seed: 32, out: [22.5, 26, 28, 30, 31.5, 32.5, 36.5, 42] },
    { id: 'o', cx: 214.5, y0: 1277, s: 3, q1: 0, q3: 3.8, lo: 0, hi: 25, n: 200, seed: 33, out: [9.5, 10, 10.5, 11, 11.5, 12, 12.5, 13, 13.5, 14, 15, 16, 17, 18, 19, 20, 21, 23, 24, 26, 27, 31, 40, 47, 59] },
    { id: 'o', cx: 260.5, y0: 1277, s: 3, q1: 0, q3: 10.5, lo: 0, hi: 26, n: 120, seed: 34, out: [35] },
    { id: 'p', cx: 351.5, y0: 1295, s: 2.28, q1: 38.5, q3: 58, lo: 10, hi: 82, n: 120, seed: 35, out: [88] },
    { id: 'p', cx: 395, y0: 1295, s: 2.28, q1: 42.5, q3: 53.5, lo: 28, hi: 70, n: 80, seed: 36, out: [79, 18] }
  ];
  BX.forEach(function (b) {
    var gj = q(b.id, '.jit'), go = q(b.id, '.out'), r = rng(b.seed);
    var Y = function (v) { return b.y0 - v * b.s; };
    for (var i = 0; i < b.n; i++) {
      var v = r() < 0.55 ? b.q1 + (b.q3 - b.q1) * r() : b.lo + (b.hi - b.lo) * Math.pow(r(), 1.6);
      mk(gj, 'circle', { cx: f1(b.cx + (r() - 0.5) * 38), cy: f1(Y(v)), r: 0.7 });
    }
    b.out.forEach(function (v) { mk(go, 'circle', { cx: b.cx, cy: f1(Y(v)), r: 1 }); });
  });

  /* ---------- violins ---------- */
  function grid(id, x1, x2, y1, y2, Y, lo, hi, step, xs) {
    var g = q(id, '.grid');
    for (var v = lo; v <= hi + 1e-9; v += step / 2) { var y = Y(v); if (y > y1 && y < y2) mk(g, 'line', { x1: x1, x2: x2, y1: f1(y), y2: f1(y) }); }
    xs.forEach(function (x) { mk(g, 'line', { x1: x, x2: x, y1: y1, y2: y2 }); });
  }
  function violin(id, c) {
    var g = q(id, '.vio'), r = rng(c.seed);
    var Y = function (v) { return c.ya - (v - c.va) * c.s; };
    function W(v) {
      var sd = v < c.mode ? c.sdL : c.sdU;
      var w = c.hw * Math.exp(-0.5 * Math.pow((v - c.mode) / sd, 2));
      if (c.ex) w += c.ex[2] * Math.exp(-0.5 * Math.pow((v - c.ex[0]) / c.ex[1], 2));
      w = Math.max(w, 1.5);
      var e = Math.min(1, (c.max - v) / 0.3, (v - c.min) / 0.3);
      return w * Math.sqrt(Math.max(e, 0));
    }
    var N = 120, R = [], L = [];
    for (var i = 0; i <= N; i++) {
      var v = c.max - (c.max - c.min) * i / N, w = W(v);
      R.push(f1(c.cx + w) + ',' + f1(Y(v)));
      L.unshift(f1(c.cx - w) + ',' + f1(Y(v)));
    }
    mk(g, 'path', { d: 'M' + R.join('L') + 'L' + L.join('L') + 'Z', fill: c.fill, 'class': 'vs' });
    for (i = 0; i < 150; i++) {
      var sd = r() < 0.5 ? c.sdL : c.sdU, v2 = c.mode + gs(r) * sd * 0.9;
      if (v2 < c.min || v2 > c.max) continue;
      mk(g, 'circle', { cx: f1(c.cx + (r() * 2 - 1) * W(v2) * 0.85), cy: f1(Y(v2)), r: 1.1, fill: c.dot, 'class': 'vj' });
    }
    var lim = c.q1 - 1.5 * (c.q3 - c.q1);
    for (i = 0; i < 7; i++) { var v3 = c.min + 0.2 + (lim - c.min - 0.2) * r(); mk(g, 'circle', { cx: c.cx, cy: f1(Y(v3)), r: 1.1, 'class': 'vo' }); }
    var hx = 5;
    mk(g, 'path', { d: 'M' + c.cx + ' ' + f1(Y(c.max - 0.15)) + 'V' + f1(Y(c.q3)) + 'M' + c.cx + ' ' + f1(Y(c.q1)) + 'V' + f1(Y(c.min + 0.15)), 'class': 'vd' });
    mk(g, 'rect', { x: c.cx - hx, y: f1(Y(c.q3)), width: 2 * hx, height: f1(Y(c.q1) - Y(c.q3)), 'class': 'vb' });
    mk(g, 'path', { d: 'M' + (c.cx - hx) + ' ' + f1(Y(c.med)) + 'h' + (2 * hx), 'class': 'vm' });
  }

  function setRow(id, fy, py, fx, px, fF, pF, cols, fungiLo) {
    var FY = function (v) { return fy.ya - (v - fy.va) * fy.s; }, PY = function (v) { return py.ya - (v - py.va) * py.s; };
    grid(id, fx[0], fx[1], fx[2], fx[3], FY, fungiLo, 10, 2.5, [fF[0], fF[1]]);
    grid(id, px[0], px[1], px[2], px[3], PY, 4, 12, 2, [pF[0], pF[1]]);
    cols.forEach(function (c, k) {
      var isF = k < 2, base = isF ? fy : py;
      c.ya = base.ya; c.va = base.va; c.s = base.s; c.cx = isF ? fF[k] : pF[k - 2]; c.seed = 100 + k * 7 + fF[0];
      violin(id, c);
    });
  }

  setRow('v1', { ya: 183, va: 0, s: 15 }, { ya: 105, va: 8, s: 21.5 }, [137, 228, 23, 186], [255, 355, 23, 186], [162, 202], [283, 328], [
    { min: 0.2, max: 10.2, mode: 7.8, sdL: 1.05, sdU: 0.8, hw: 17, q1: 7.0, med: 7.6, q3: 8.2, fill: '#d4e8cb', dot: '#5f9352' },
    { min: 0.7, max: 10.2, mode: 7.5, sdL: 1.15, sdU: 0.9, hw: 17, q1: 6.8, med: 7.5, q3: 8.1, fill: '#efd0d0', dot: '#b06565' },
    { min: 4.8, max: 11.3, mode: 9.1, sdL: 0.6, sdU: 0.55, hw: 18, q1: 8.6, med: 9.1, q3: 9.6, fill: '#d4e8cb', dot: '#5f9352' },
    { min: 4.5, max: 11.4, mode: 9.0, sdL: 0.55, sdU: 0.5, hw: 19, q1: 8.6, med: 9.0, q3: 9.4, fill: '#efd0d0', dot: '#b06565' }
  ], 0);

  setRow('v2', { ya: 629, va: 0, s: 15 }, { ya: 551, va: 8, s: 22 }, [137, 229, 470, 634], [257, 358, 470, 634], [162, 204], [284, 330], [
    { min: 0.2, max: 9.7, mode: 7.7, sdL: 0.9, sdU: 0.75, hw: 17, q1: 7.0, med: 7.6, q3: 8.1, fill: '#faecd8', dot: '#c49d5f' },
    { min: 0.6, max: 10.1, mode: 7.6, sdL: 1.0, sdU: 0.8, hw: 18, q1: 6.9, med: 7.6, q3: 8.2, fill: '#d2d2d2', dot: '#5a5a5a' },
    { min: 4.8, max: 11.1, mode: 9.1, sdL: 0.55, sdU: 0.55, hw: 19, q1: 8.6, med: 9.1, q3: 9.6, fill: '#faecd8', dot: '#c49d5f' },
    { min: 4.7, max: 11.5, mode: 9.05, sdL: 0.5, sdU: 0.5, hw: 21, q1: 8.6, med: 9.05, q3: 9.5, fill: '#d2d2d2', dot: '#5a5a5a' }
  ], 0);

  setRow('v3', { ya: 1071, va: 0, s: 15.3 }, { ya: 988, va: 8, s: 21.3 }, [138, 228, 906, 1070], [258, 359, 906, 1070], [163, 203], [285, 332], [
    { min: 1.0, max: 10.4, mode: 7.3, sdL: 1.1, sdU: 1.0, hw: 15, q1: 6.4, med: 7.3, q3: 8.1, fill: '#d2e6ef', dot: '#6a98ad' },
    { min: 0.9, max: 10.0, mode: 8.0, sdL: 0.75, sdU: 0.7, hw: 17, q1: 7.4, med: 7.9, q3: 8.5, fill: '#d3e6a0', dot: '#7a9736' },
    { min: 4.7, max: 11.5, mode: 9.0, sdL: 0.5, sdU: 0.55, hw: 19, q1: 8.6, med: 9.0, q3: 9.4, fill: '#d2e6ef', dot: '#6a98ad' },
    { min: 6.6, max: 10.9, mode: 9.2, sdL: 0.45, sdU: 0.4, hw: 18, ex: [7.7, 0.35, 5], q1: 8.8, med: 9.15, q3: 9.5, fill: '#d3e6a0', dot: '#7a9736' }
  ], 0);
})();
```
